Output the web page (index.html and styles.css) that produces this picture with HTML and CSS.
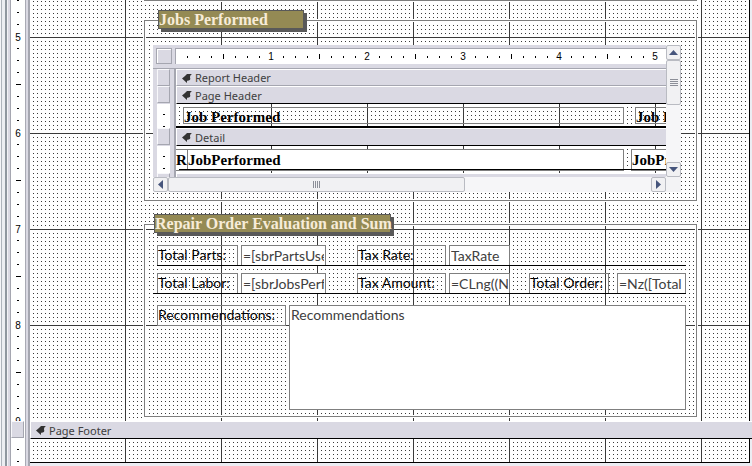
FILE: index.html
```
<!DOCTYPE html>
<html lang="en">
<head>
<meta charset="utf-8">
<title>Report Design</title>
<link rel="stylesheet" href="styles.css">
</head>
<body>
<svg class="defs" width="0" height="0" aria-hidden="true">
  <symbol id="arrow" viewBox="0 0 10 9"><path d="M10 0H5L3 2 0 4.500 5 9V6.800C7.500 6.800 9 5.500 8 3.500 8 2 8.500 1 10 0z"/></symbol>
</svg>
<main class="designer">
  <div class="edge"></div>
  <div class="ruler-column">
    <div class="ruler vertical">
      <div class="inch"><span>5</span></div>
      <div class="inch"><span>6</span></div>
      <div class="inch"><span>7</span></div>
      <div class="inch"><span>8</span></div>
      <div class="inch"><span>9</span></div>
    </div>
    <button class="selector" aria-label="Select page footer"></button>
    <div class="ruler vertical footer-ruler"><div class="inch"></div></div>
  </div>
  <div class="divider"></div>
  <div class="sections">
    <section class="canvas detail">
      <div class="frame frame-above"></div>
      <div class="frame frame-jobs"></div>
      <div class="frame frame-totals"></div>
      <h2 class="caption caption-jobs">Jobs Performed</h2>
      <h2 class="caption caption-totals">Repair Order Evaluation and Sum</h2>

      <div class="subform">
        <div class="sub-view">
          <div class="sub-top">
            <button class="corner" aria-label="Select subreport"></button>
            <div class="ruler horizontal">
              <div class="inch"></div>
              <div class="inch"><span>1</span></div>
              <div class="inch"><span>2</span></div>
              <div class="inch"><span>3</span></div>
              <div class="inch"><span>4</span></div>
              <div class="inch"><span>5</span></div>
            </div>
          </div>
          <div class="sub-row">
            <button class="selector" aria-label="Select report header"></button>
            <div class="bar"><svg><use href="#arrow"/></svg>Report Header</div>
          </div>
          <div class="sub-row">
            <button class="selector" aria-label="Select page header"></button>
            <div class="bar bar-open"><svg><use href="#arrow"/></svg>Page Header</div>
          </div>
          <div class="sub-row">
            <div class="mini-ruler"></div>
            <div class="sub-canvas sub-page">
              <div class="tag tag-job">Job Performed</div>
              <div class="tag tag-next">Job Price</div>
            </div>
          </div>
          <div class="sub-row">
            <button class="selector" aria-label="Select detail"></button>
            <div class="bar bar-open"><svg><use href="#arrow"/></svg>Detail</div>
          </div>
          <div class="sub-row">
            <div class="mini-ruler"></div>
            <div class="sub-canvas sub-detail">
              <div class="tag bound tag-id">R</div>
              <div class="tag bound tag-performed">JobPerformed</div>
              <div class="tag bound tag-price">JobPrice</div>
              <div class="sub-rule"></div>
            </div>
          </div>
          <div class="sub-row">
            <button class="selector" aria-label="Select page footer"></button>
            <div class="bar"></div>
          </div>
        </div>
        <div class="scroll scroll-y">
          <button aria-label="Scroll up"><svg viewBox="0 0 9 5"><path d="M0 5 4.500 0 9 5z"/></svg></button>
          <div class="thumb"><i class="grip"></i></div>
          <button class="end" aria-label="Scroll down"><svg viewBox="0 0 9 5"><path d="M0 0h9L4.500 5z"/></svg></button>
        </div>
        <div class="scroll scroll-x">
          <button aria-label="Scroll left"><svg viewBox="0 0 5 9"><path d="M5 0v9L0 4.500z"/></svg></button>
          <div class="thumb"><i class="grip"></i></div>
          <button class="end" aria-label="Scroll right"><svg viewBox="0 0 5 9"><path d="M0 0v9l5-4.500z"/></svg></button>
        </div>
        <div class="scroll-corner"></div>
      </div>

      <label class="box row1 parts-label" for="parts">Total Parts:</label>
      <input class="box row1 parts" id="parts" value="=[sbrPartsUsed]">
      <label class="box row1 rate-label" for="rate">Tax Rate:</label>
      <input class="box row1 rate" id="rate" value="TaxRate">
      <div class="rule rule1"></div>
      <label class="box row2 parts-label" for="labor">Total Labor:</label>
      <input class="box row2 parts" id="labor" value="=[sbrJobsPerformed]">
      <label class="box row2 rate-label" for="amount">Tax Amount:</label>
      <input class="box row2 rate" id="amount" value="=CLng((Nz">
      <label class="box row2 order-label" for="order">Total Order:</label>
      <input class="box row2 order" id="order" value="=Nz([Total">
      <div class="rule rule2"></div>
      <label class="box row3 notes-label" for="notes">Recommendations:</label>
      <textarea class="box row3 notes" id="notes">Recommendations</textarea>
    </section>
    <div class="bar bar-open"><svg><use href="#arrow"/></svg>Page Footer</div>
    <section class="canvas footer"></section>
  </div>
</main>
</body>
</html>
```
FILE: styles.css
```
* { box-sizing: border-box; }
body { margin: 0; background: #ecedf3; overflow: hidden; }
.defs { position: absolute; }
button { padding: 0; margin: 0; }

.designer { display: flex; min-height: 100vh; }
.edge {
  flex: 0 0 11px;
  background: linear-gradient(90deg, #f4f5f8 1px, #aeb4bc 1px 2px, #eceef2 2px 5px, #8f979f 5px 7px, #f2f2f6 7px 8px, #dad9e3 8px 10px, #a5a6b0 10px);
}
.ruler-column { flex: 0 0 14px; display: flex; flex-direction: column; background: #fff; }
.divider {
  flex: 0 0 5px;
  background: linear-gradient(90deg, #a9aab4 1px, #dad9e3 1px 3px, #a5a6b0 3px);
}
.sections { flex: 1; min-width: 0; }

/* Rulers: one .inch block per inch, with a half-inch mark on its leading edge */
.ruler { overflow: hidden; background: #fff; font: 10px/12px "Liberation Sans", sans-serif; color: #000; }
.ruler.vertical { height: 421px; }
.ruler.vertical .inch {
  height: 96px;
  padding-top: 4px;
  display: flex;
  align-items: center;
  justify-content: center;
  background:
    linear-gradient(#000, #000) 5px 0 / 5px 1px no-repeat,
    linear-gradient(#000 1px, transparent 1px) 6px 0 / 2px 12px repeat-y,
    #fff;
}
.ruler.vertical .inch:first-child { margin-top: -12px; }
.ruler span { background: #fff; }
.ruler.vertical.footer-ruler { height: 28px; }
.footer-ruler .inch:first-child { margin-top: 0; background-position: 0 -9px, 6px 11px; background-size: 0 0, 2px 12px; }
.selector {
  flex: none;
  width: 13px;
  height: 17px;
  background: #dad9e3;
  border: 1px solid;
  border-color: #f8f8fb #a5a6b0 #a5a6b0 #f8f8fb;
  border-radius: 0;
}

/* Design grid: lines each 96px, dots each 4px */
.canvas, .sub-canvas { position: relative; }
.canvas {
  margin-right: 2px;
  border-right: 1px solid #000;
}
.detail {
  height: 421px;
  background:
    linear-gradient(90deg, #3a3a3a 1px, transparent 1px) -1px 0 / 96px 96px,
    linear-gradient(#3a3a3a 1px, transparent 1px) 0 37px / 96px 96px,
    linear-gradient(transparent 1px, #fff 1px) 0 37px / 4px 4px,
    linear-gradient(90deg, #3a3a3a 1px, #fff 1px) -1px 0 / 4px 4px;
}
.footer {
  height: 24px;
  border-bottom: 1px solid #000;
  background:
    linear-gradient(90deg, #3a3a3a 1px, transparent 1px) -1px 0 / 96px 96px,
    linear-gradient(transparent 1px, #fff 1px) 0 3px / 4px 4px,
    linear-gradient(90deg, #3a3a3a 1px, #fff 1px) -1px 0 / 4px 4px;
}

.bar {
  flex: 1;
  height: 17px;
  display: flex;
  align-items: center;
  gap: 3px;
  padding: 1px 0 0 5px;
  background: #dad9e3;
  border: 1px solid;
  border-color: #fff transparent #a5a6b0 #fff;
  border-right: 0;
  color: #404040;
  font: 11px/14px "Noto Sans", sans-serif;
}
.bar svg { width: 10px; height: 9px; fill: #333; }
.bar-open { height: 18px; border-bottom-color: #000; }

/* Controls placed on the design surface */
.frame { position: absolute; left: 114px; width: 553px; border: 1px solid #7f7f7f; box-shadow: inset 0 0 0 1px #fff, 0 0 0 1px #fff; }
.frame-above { top: -20px; height: 21px; }
.frame-jobs { top: 20px; height: 181px; }
.frame-totals { top: 224px; height: 193px; }
.caption {
  position: absolute;
  margin: 0;
  height: 19px;
  white-space: nowrap;
  background: #948a54;
  border: 1px solid #595959;
  box-shadow: 3px 3px #595959;
  color: #f7ecd8;
  font: bold 16px/18px "Liberation Serif", serif;
}
.caption-jobs { left: 128px; top: 10px; width: 146px; }
.caption-totals { left: 124px; top: 214px; width: 237px; }

.box {
  position: absolute;
  height: 21px;
  margin: 0;
  border: 1px solid #7f7f7f;
  border-radius: 0;
  font: 14px/18px Lato, sans-serif;
  white-space: nowrap;
  overflow: hidden;
}
label.box { color: #000; line-height: 17px; }
input.box, textarea.box { background: #fff; color: #404040; padding: 0 1px; outline: 0; resize: none; }
.row1 { top: 245px; }
.row2 { top: 273px; }
.row3 { top: 305px; }
.parts-label { left: 127px; width: 81px; }
.parts { left: 211px; width: 85px; }
.rate-label { left: 327px; width: 89px; }
.rate { left: 419px; width: 61px; }
.order-label { left: 499px; width: 80px; }
.order { left: 587px; width: 69px; }
.notes-label { left: 127px; width: 129px; }
textarea.notes { left: 259px; width: 397px; height: 105px; }
.rule { position: absolute; height: 1px; background: #000; }
.rule1 { left: 127px; top: 265px; width: 529px; }
.rule2 { left: 123px; top: 293px; width: 533px; }

/* Embedded subreport */
.subform {
  position: absolute;
  left: 123px;
  top: 45px;
  width: 528px;
  display: grid;
  grid-template: 132px 15px / 1fr 15px;
  background: #dad9e3;
}
.sub-view { overflow: hidden; min-width: 0; }
.sub-top { display: flex; gap: 3px; padding: 3px 0 4px 3px; border-bottom: 1px solid #a5a6b0; }
.corner { width: 16px; height: 16px; background: #dad9e3; border: 1px solid #a5a6b0; box-shadow: inset 1px 1px #fff; }
.ruler.horizontal { flex: 1; display: flex; height: 16px; border: 1px solid #a5a6b0; border-width: 1px 0 0 1px; }
.horizontal .inch {
  flex: 0 0 96px;
  display: flex;
  align-items: center;
  justify-content: center;
  background:
    linear-gradient(#000, #000) 0 5px / 1px 5px no-repeat,
    linear-gradient(90deg, #000 1px, transparent 1px) 0 7px / 12px 2px repeat-x;
}
.horizontal .inch:first-child {
  flex-basis: 47px;
  background-position: 0 0, -1px 7px;
  background-size: 0 0, 12px 2px;
}
.sub-row { display: flex; gap: 5px; padding-left: 4px; background: linear-gradient(90deg, transparent 21px, #a5a6b0 21px 23px, transparent 23px); }
.mini-ruler {
  flex: 0 0 13px;
  background: #fff linear-gradient(#000 1px, transparent 1px) 6px 10px / 2px 12px repeat-y;
}
.sub-row .bar { margin-left: 1px; }
.sub-canvas { flex: 1; margin-left: 1px; overflow: hidden; }
.sub-page {
  height: 24px;
  border-bottom: 2px solid #000;
  background:
    linear-gradient(90deg, #3a3a3a 1px, transparent 1px) -1px 0 / 96px 96px,
    linear-gradient(transparent 1px, #fff 1px) 0 3px / 4px 4px,
    linear-gradient(90deg, #3a3a3a 1px, #fff 1px) -1px 0 / 4px 4px;
}
.sub-detail {
  height: 27px;
  background:
    linear-gradient(90deg, #3a3a3a 1px, transparent 1px) -1px 0 / 96px 96px,
    linear-gradient(transparent 1px, #fff 1px) 0 3px / 4px 4px,
    linear-gradient(90deg, #3a3a3a 1px, #fff 1px) -1px 0 / 4px 4px;
}
.tag {
  position: absolute;
  top: 3px;
  height: 17px;
  border: 1px solid #7f7f7f;
  color: #000;
  font: bold 15px/18px "Liberation Serif", serif;
  white-space: nowrap;
}
.bound { background: #fff; height: 22px; line-height: 20px; }
.tag-job { left: 7px; width: 441px; }
.tag-next { left: 459px; width: 120px; }
.tag-id { left: -1px; width: 13px; }
.tag-performed { left: 11px; width: 437px; }
.tag-price { left: 455px; width: 120px; }
.sub-rule { position: absolute; left: 3px; right: 0; top: 23px; height: 1px; background: #000; }

.scroll { display: flex; background: #f6f6f8; }
.scroll-y { flex-direction: column; }
.scroll button, .thumb {
  flex: 0 0 15px;
  display: flex;
  align-items: center;
  justify-content: center;
  border: 1px solid #b9bbc2;
  border-radius: 2px;
  background: #f1f1f3;
}
.scroll svg { width: 9px; height: 5px; fill: #46557c; }
.scroll-x svg { width: 5px; height: 9px; }
.scroll .end { margin-top: auto; }
.scroll-x .end { margin: 0 0 0 auto; }
.scroll-y .thumb { flex-basis: 45px; }
.scroll-x .thumb { flex-basis: 297px; }
.grip { width: 8px; height: 7px; background: repeating-linear-gradient(#8c8f98 0 1px, transparent 1px 2px); }
.scroll-x .grip { background: repeating-linear-gradient(90deg, #8c8f98 0 1px, transparent 1px 2px); }
.scroll-corner { background: #f3f3f5; }
```
